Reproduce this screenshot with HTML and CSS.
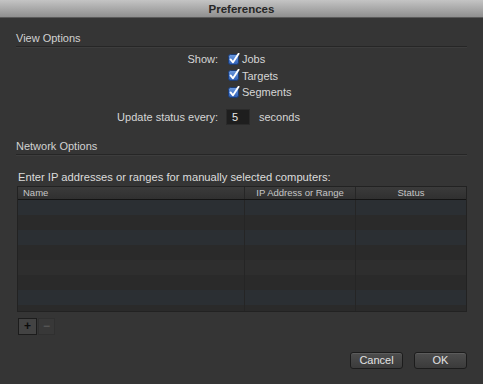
FILE: index.html
```html
<!DOCTYPE html>
<html>
<head>
<meta charset="utf-8">
<link rel="stylesheet" href="styles.css">
</head>
<body>
<div class="window">
  <div class="titlebar">Preferences</div>
  <div class="content">
    <div class="section-head first">View Options</div>
    <div class="form-grid">
      <div class="label">Show:</div>
      <div class="checks">
        <div class="check-row"><svg class="cb" viewBox="0 0 12 12" width="12" height="12"><defs><linearGradient id="g1" x1="0" y1="0" x2="0" y2="1"><stop offset="0" stop-color="#6d9be0"/><stop offset="1" stop-color="#2d5db3"/></linearGradient></defs><rect x="0.5" y="1.5" width="10" height="10" rx="2" fill="url(#g1)" stroke="#1c3c74"/><path d="M2.6 6.4 L5 9.3 L10.6 0.8" fill="none" stroke="#fff" stroke-width="1.9" stroke-linecap="round" stroke-linejoin="round"/></svg><span>Jobs</span></div>
        <div class="check-row"><svg class="cb" viewBox="0 0 12 12" width="12" height="12"><rect x="0.5" y="1.5" width="10" height="10" rx="2" fill="url(#g1)" stroke="#1c3c74"/><path d="M2.6 6.4 L5 9.3 L10.6 0.8" fill="none" stroke="#fff" stroke-width="1.9" stroke-linecap="round" stroke-linejoin="round"/></svg><span>Targets</span></div>
        <div class="check-row"><svg class="cb" viewBox="0 0 12 12" width="12" height="12"><rect x="0.5" y="1.5" width="10" height="10" rx="2" fill="url(#g1)" stroke="#1c3c74"/><path d="M2.6 6.4 L5 9.3 L10.6 0.8" fill="none" stroke="#fff" stroke-width="1.9" stroke-linecap="round" stroke-linejoin="round"/></svg><span>Segments</span></div>
      </div>
      <div class="label update">Update status every:</div>
      <div class="update-row"><div class="num-input">5</div><span class="unit">seconds</span></div>
    </div>
    <div class="section-head second">Network Options</div>
    <div class="prompt">Enter IP addresses or ranges for manually selected computers:</div>
    <div class="table">
      <div class="thead">
        <div class="th name">Name</div>
        <div class="th ip">IP Address or Range</div>
        <div class="th status">Status</div>
      </div>
      <div class="tbody">
        <div class="tr alt"><div class="td c1"></div><div class="td c2"></div><div class="td c3"></div></div>
        <div class="tr"><div class="td c1"></div><div class="td c2"></div><div class="td c3"></div></div>
        <div class="tr alt"><div class="td c1"></div><div class="td c2"></div><div class="td c3"></div></div>
        <div class="tr"><div class="td c1"></div><div class="td c2"></div><div class="td c3"></div></div>
        <div class="tr alt2"><div class="td c1"></div><div class="td c2"></div><div class="td c3"></div></div>
        <div class="tr"><div class="td c1"></div><div class="td c2"></div><div class="td c3"></div></div>
        <div class="tr alt"><div class="td c1"></div><div class="td c2"></div><div class="td c3"></div></div>
        <div class="tr short"><div class="td c1"></div><div class="td c2"></div><div class="td c3"></div></div>
      </div>
    </div>
    <div class="pm">
      <div class="pm-btn plus">+</div>
      <div class="pm-btn minus">&minus;</div>
    </div>
    <div class="footer">
      <div class="btn">Cancel</div>
      <div class="btn">OK</div>
    </div>
  </div>
</div>
</body>
</html>
```

FILE: styles.css
```css
* { box-sizing: border-box; }
html, body { margin: 0; padding: 0; }
body {
  width: 483px;
  height: 384px;
  background: #353535;
  font-family: "Liberation Sans", Arial, sans-serif;
  font-size: 11px;
  color: #d6d6d6;
  overflow: hidden;
}
.window {
  width: 483px;
  height: 384px;
  background: #353535;
}
.titlebar {
  height: 18px;
  background: linear-gradient(#c4c4c4, #8f8f8f);
  border-bottom: 1px solid #5a5a5a;
  color: #262626;
  font-weight: bold;
  font-size: 11.5px;
  line-height: 18px;
  text-align: center;
}
.content {
  padding: 0 16px;
}
.section-head {
  line-height: 14px;
  color: #d2d2d2;
  padding-bottom: 1px;
  border-bottom: 1px solid #262626;
  box-shadow: 0 1px 0 #3d3d3d;
}
.section-head.first { margin-top: 13px; }
.section-head.second { margin-top: 14px; }
.form-grid {
  display: grid;
  grid-template-columns: 202px auto;
  column-gap: 8px;
  margin-top: 4px;
  align-items: start;
}
.label {
  text-align: right;
  line-height: 16px;
  color: #d6d6d6;
}
.label.update {
  margin-top: 8px;
}
.checks {
  display: flex;
  flex-direction: column;
}
.check-row {
  height: 16.5px;
  display: flex;
  align-items: center;
  gap: 2px;
  padding-left: 2px;
}
.cb { display: block; flex: none; margin-top: -1px; }
.update-row {
  margin-top: 8px;
  display: flex;
  align-items: center;
  height: 16px;
}
.num-input {
  width: 24px;
  height: 16px;
  background: #1e1e1e;
  border: 1px solid #2a2a2a;
  color: #e8e8e8;
  line-height: 14px;
  padding-left: 5px;
}
.unit {
  margin-left: 9px;
}
.prompt {
  margin-top: 15px;
  margin-left: 2px;
  line-height: 14px;
  font-size: 11.2px;
  color: #dcdcdc;
}
.table {
  margin-top: 2px;
  margin-left: 1px;
  width: 450px;
  height: 126px;
  border: 1px solid #222;
  background: #2b2b2b;
  display: flex;
  flex-direction: column;
  overflow: hidden;
}
.thead {
  display: flex;
  height: 13px;
  background: linear-gradient(#3b3b3b, #303030);
  border-bottom: 1px solid #141414;
  flex: none;
}
.th {
  font-size: 9.5px;
  line-height: 12px;
  color: #c6c6c6;
}
.th.name { width: 227px; padding-left: 5px; border-right: 1px solid #262626; }
.th.ip { width: 111px; text-align: center; border-right: 1px solid #262626; }
.th.status { flex: 1; text-align: center; }
.tbody {
  flex: 1;
  display: flex;
  flex-direction: column;
}
.tr {
  display: flex;
  height: 15px;
  flex: none;
  background: #2a2a2a;
}
.tr.alt { background: #2b2f33; }
.tr.alt2 { background: #2e2e2e; }
.tr.short { height: 7px; }
.td { height: 100%; }
.td.c1 { width: 227px; border-right: 1px solid #252525; }
.td.c2 { width: 111px; border-right: 1px solid #252525; }
.td.c3 { flex: 1; }
.pm {
  display: flex;
  margin-top: 6px;
  margin-left: 2px;
  gap: 1px;
}
.pm-btn {
  width: 19px;
  height: 17px;
  text-align: center;
  line-height: 15px;
  font-weight: bold;
  font-size: 12px;
}
.pm-btn.plus {
  background: #434343;
  border: 1px solid #1c1c1c;
  color: #0c0c0c;
}
.pm-btn.minus {
  width: 17px;
  background: #383838;
  border: 1px solid #303030;
  color: #555;
}
.footer {
  margin-top: 17px;
  display: flex;
  justify-content: flex-end;
  gap: 11px;
}
.btn {
  width: 53px;
  height: 17px;
  border: 1px solid #1c1c1c;
  border-radius: 3px;
  background: linear-gradient(#4d4d4d, #3b3b3b);
  box-shadow: inset 0 1px 0 #5c5c5c;
  color: #e2e2e2;
  text-align: center;
  line-height: 15px;
  font-size: 11px;
}
```
